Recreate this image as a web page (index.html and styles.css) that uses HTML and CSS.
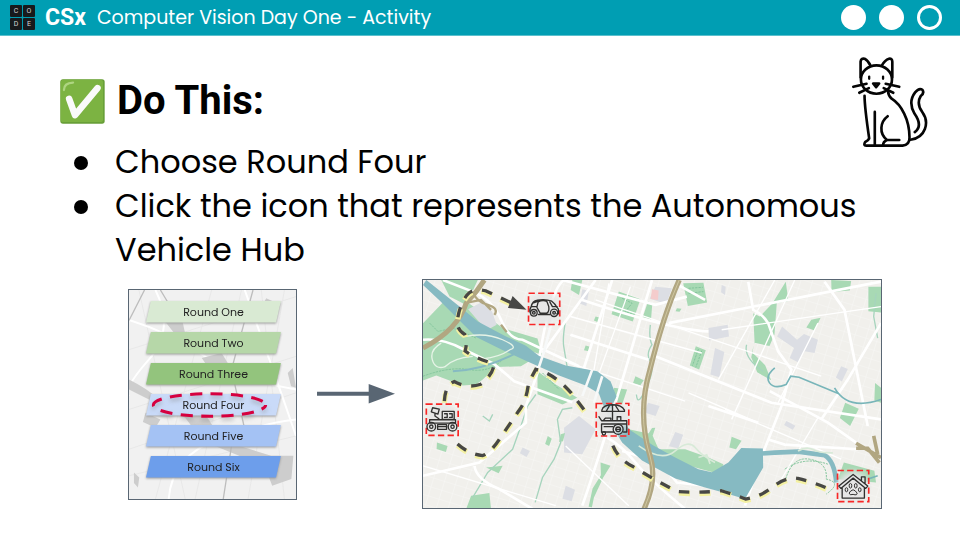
FILE: index.html
```html
<!DOCTYPE html>
<html lang="en">
<head>
<meta charset="utf-8">
<meta name="viewport" content="width=device-width, initial-scale=1">
<title>Computer Vision Day One - Activity</title>
<link rel="stylesheet" href="styles.css">
</head>
<body>
<header class="topbar">
  <div class="logo"><span>C</span><span>O</span><span>D</span><span>E</span></div>
  <strong class="course">CSx</strong>
  <span class="lesson">Computer Vision Day One - Activity</span>
  <div class="progress"><i class="dot"></i><i class="dot"></i><i class="dot dot-open"></i></div>
</header>
<main>
  <section class="intro">
    <div class="title-row">
      <svg class="check" viewBox="0 0 138 138" aria-hidden="true">
        <rect x="1" y="1" width="136" height="136" rx="8" fill="#689f38"/>
        <rect x="2" y="2" width="130" height="130" rx="8" fill="#7cb342"/>
        <path d="M12 34Q12 12 40 11" fill="none" stroke="#aed581" stroke-width="7" stroke-linecap="round"/>
        <path d="M28 61 46 111 115 28" fill="none" stroke="#fafafa" stroke-width="20" stroke-linecap="round" stroke-linejoin="round"/>
      </svg>
      <h1>Do This:</h1>
    </div>
    <svg class="cat" viewBox="96 168 236 282" fill="none" stroke="#050505" stroke-width="8" stroke-linecap="round" stroke-linejoin="round" aria-hidden="true">
      <path d="M125 232V184Q126 173 137 175Q148 181 155 196M189 196Q198 179 211 175Q221 174 221 184V232"/>
      <ellipse cx="173" cy="238" rx="47" ry="43"/>
      <path d="M151 229v7M193 229v7" stroke-width="7"/>
      <path d="M163 250h18l-9 11ZM143 251l-40 9M150 264l-29 14M201 251l41 9M195 264l29 14"/>
      <path d="M137 287Q137 320 151 416Q148 423 139 427Q132 438 142 438H252Q274 436 273 413C273 359 248 314 219 296Q209 287 208 274"/>
      <path d="M168 336V437M207 349C184 366 180 401 205 421H242M205 421Q193 426 193 437"/>
      <path d="M276 420C322 414 334 367 312 337Q293 311 307 288Q319 279 312 269Q302 262 290 277Q268 306 288 341C307 368 304 386 289 397"/>
    </svg>
    <ul class="steps">
      <li>Choose Round Four</li>
      <li>Click the icon that represents the Autonomous Vehicle Hub</li>
    </ul>
  </section>
  <section class="figures">
    <div class="rounds">
      <svg class="rounds-map" viewBox="0 0 505 630" preserveAspectRatio="none" fill="none" aria-hidden="true">
        <path d="M0 0H505V630H0Z" fill="#f1f1f1"/>
        <g stroke="#e8e8e8" stroke-width="3"><path d="M0 180 505 20M0 480 505 310M0 560 505 440M0 360 505 200M30 0 170 630M250 0 80 630M340 0 200 630M470 0 360 630M400 0 470 630"/></g>
        <g stroke="#fff" stroke-width="6"><path d="M0 90Q130 130 230 200T505 300M80 0Q140 120 60 210T0 320M350 0 460 310 505 440M120 630Q130 500 270 450T505 390"/></g>
        <g fill="#cdcdcd"><path d="M0 270Q60 300 90 330L200 350Q250 385 270 450L430 500H497L491 570 433 590 410 530 260 470Q200 430 170 385L80 340 0 300ZM105 90l55-3 10 45-30 2ZM390 70l25-45 18 8-12 34ZM220 205l60-15 20 32-65 5ZM480 250l15-15 10 60-15-5ZM50 370l45 20-15 25-38-17ZM15 550l16 15-4 30-12-13Z"/></g>
        <path d="M47 0 0 92M375 0 310 240 350 420M285 630 310 470M95 0 130 58" stroke="#bdbdbd" stroke-width="4"/>
      </svg>
      <button class="round r1"><span>Round One</span></button>
      <button class="round r2"><span>Round Two</span></button>
      <button class="round r3"><span>Round Three</span></button>
      <div class="picked">
        <button class="round r4"><span>Round Four</span></button>
        <svg class="ring" viewBox="0 0 350 82" preserveAspectRatio="none" aria-hidden="true"><ellipse cx="175" cy="41" rx="168" ry="33" fill="none" stroke="#d6003f" stroke-width="9" stroke-dasharray="36 25" stroke-dashoffset="18"/></svg>
      </div>
      <button class="round r5"><span>Round Five</span></button>
      <button class="round r6"><span>Round Six</span></button>
    </div>
    <svg class="arrow" viewBox="0 0 80 24" aria-hidden="true"><path d="M0 12H56" stroke="#596673" stroke-width="4"/><path d="M53 2 80 12 53 22Z" fill="#596673"/></svg>
    <div class="map">
      <svg viewBox="0 0 1380 687" preserveAspectRatio="xMidYMid slice" fill="none" role="img" aria-label="City map">
        <defs>
          <pattern id="streets" width="34" height="28" patternUnits="userSpaceOnUse" patternTransform="rotate(17)"><path d="M0 0H34M0 0V28" stroke="#f8f8f6" stroke-width="3"/></pattern>
          <radialGradient id="halo"><stop offset=".55" stop-color="#e6e6e6" stop-opacity=".95"/><stop offset="1" stop-color="#dcdcdc" stop-opacity="0"/></radialGradient>
        </defs>
        <path d="M0 0H1380V690H0Z" fill="#f1f0ec"/>
        <path d="M0 0H1380V690H0Z" fill="url(#streets)"/>
        <g fill="#dcdee4">
          <path d="M425 445 470 410 520 450 480 525 425 520ZM430 620l28 12-10 35-28-8ZM300 505l22 10-10 18-20-11ZM480 28l20 5-8 45-20-7ZM700 20l50 5-17 48-50-17ZM678 370l35 10-12 30-34-11ZM760 458l24 8-15 42-28-7ZM1082 140 1127 180 1148 163 1190 180 1180 220 1150 215 1130 248 1105 235 1118 205 1067 170ZM860 145l58-10 4 35-60 12ZM880 205l28 12-15 76-27-8ZM1260 260l20 8-18 38-18-12ZM1095 425l27 14-8 12-26-14ZM900 15l12 5-2 25-12-8Z"/>
          <path d="M690 28l20 4-2 28-22-3Z" fill="#f4cccc"/>
        </g>
        <g fill="#a8d9b4">
          <path d="M0 130 60 68 100 105 210 180 320 245 295 260 220 262 180 300 160 315 120 318 80 303 40 288 0 303ZM55 0H165L130 75 80 50ZM125 60 240 145 345 176 358 225 305 208 190 160 110 115ZM345 275 400 315 465 355 420 375 345 344Z"/>
          <path d="M590 35 655 58 632 125 568 103ZM450 0H480L470 45 445 30ZM678 65l13 5-4 50-25-8ZM784 10 845 8 856 68 798 78ZM822 200l30 12-20 58-28-12ZM995 100l20 10 38-40 40-65 8 58-35 6-7 95-15 35-45-10-8 28 40 40 18 45-42-24-18-45 10-46Z"/>
          <path d="M1170 120 1198 114 1180 152 1155 143ZM1342 20H1380V98L1342 94ZM1230 0 1290 3 1286 32 1231 36ZM1272 370 1313 388 1287 440 1256 416ZM930 472l30 12-17 26-20-5ZM145 650l55-8 5 48H130ZM42 490l32 10-5 18-28-9ZM376 470l12 8-8 22-12-6ZM415 465l13-4-6 25-12 2ZM620 450 690 465 710 510 790 510 860 535 905 555 895 585 785 555 650 510ZM700 445l-10 30-20 3 20-32ZM1268 550 1360 575 1365 610 1250 600ZM535 550l30 10-22 35-28 60-6 30-10-2 12-55 25-40ZM640 290l25 12-10 15-22-7ZM1362 310l18 15v45l-20-7Z"/>
          <path d="M490 197l13 4-3 14-15-3ZM520 110l14 4-5 14-14-6ZM1082 32l10 1v8h-10ZM765 85l14 2-6 9-12-2ZM190 565l50-5-12 22ZM575 325l40 5-15 45-22-10Z"/>
        </g>
        <path d="M136 88 175 68 208 95 222 135 195 150 168 125Z" fill="#dcdee4"/>
        <path d="M20 130 45 155 90 145 160 175M0 290Q80 260 140 270T240 240M360 280 410 330M600 55l30 15-20 25 25 10M800 25l43-3M800 40l45-5M830 208l-18 50M840 213l-18 50M1090 610q20-80 75-70t50 60q50 10 0 45M1090 570q60-40 130-15" stroke="#82c59b" stroke-width="3" stroke-dasharray="7 3"/>
        <path d="M685 135q-5 40 5 60-20 30-5 50t-12 80-30 20M430 120q-10 55-6 80t10 60M975 195q-10 40 50 80M1365 40l-7 70 12 65M340 345l-25 35-20 60-25 70-75 70-45 75M450 385l-30 5-15 30 10 70-20 50-35 55-22 75M180 410l20 15 10-20" stroke="#a6d4bd" stroke-width="4"/>
        <g stroke="#fff" stroke-width="8">
          <path d="M60 0 150 35Q210 60 235 120T300 180L470 260M350 265 310 380 310 430 170 550 0 590M155 560Q160 600 230 630L330 690M480 680Q550 480 660 100L690 0M360 220 520 0M345 270Q380 30 425 0M480 60Q750 150 860 155M444 165 680 240M700 230 1050 370 1380 420M420 0 700 75 795 50M740 130 1380 5M760 10 850 60M555 475Q600 500 640 550T790 690M600 515Q720 545 765 610L900 625"/>
          <path d="M980 5 995 90Q1020 100 1040 130L1070 215 1110 270 1080 380 1025 520 970 680M1210 5 1270 90 1340 440M1380 130 1280 300 1200 420M1010 430 860 380M1045 335 1220 430 1305 490M1038 480 1090 496 1310 510M570 0 480 280M0 180Q60 175 120 208L214 253 275 305 450 368"/>
        </g>
        <g stroke="#fff" stroke-width="4"><path d="M0 560 400 680M560 10 510 300M625 20 520 310M444 110 840 220M520 60 1200 290M440 250 790 365M800 340 1010 430M1060 0 890 300M1120 0 930 420M1190 130 1070 370M910 390 1260 540M430 500 620 680M900 150 1380 80M1190 415 1080 600"/></g>
        <path d="M10 0 60 40 110 80 165 125 250 170 310 198 350 229 430 258 525 275 565 305 583 350 570 378 595 420 625 453 694 499 760 535 830 570 870 579 920 550 959 506 1024 508 1025 565 970 660 905 640 850 625 760 598 660 544 600 490 570 440 545 382 530 342 490 318 410 288 310 243 250 216 160 172 110 122 50 62 0 15Z" fill="#86bac2"/>
        <path d="M1020 523 1060 520 1130 517 1210 528Q1240 545 1245 610" stroke="#86bac2" stroke-width="14"/>
        <path d="M1060 265q-30 25-16 45t50 5l14-25 25 3 120 50M1240 325q40 70 140 35M1340 600l30-10" stroke="#78b5b9" stroke-width="5"/>
        <path d="M90 275Q190 270 290 215" stroke="#86bac2" stroke-width="6"/>
        <path d="M650 500q70 50 110 15t60-10 60 45M830 535l25-8 10 27M1130 515q25-15 45-4t60 10" stroke="#d8ead8" stroke-width="5"/>
        <path d="M340 290 365 215 400 80M480 350 510 270M515 370 540 290" stroke="#f7f9f9" stroke-width="8"/>
        <path d="M55 190Q20 210 28 240T65 262Q90 235 150 230M130 170Q190 158 240 180T262 210Q230 232 180 238" stroke="#e6f3e6" stroke-width="4"/>
        <g stroke="#b1a681" stroke-width="15"><path d="M185 0 160 35 130 70Q105 150 0 205"/><path d="M772 0Q725 105 684 270C650 385 666 470 684 530Q707 600 666 690" stroke-width="16"/><path d="M150 36Q160 65 195 75T215 105M125 70 175 60 205 90M235 135l17 22" stroke-width="7"/><path d="M1305 492 1380 535M1305 507H1340L1375 550M1358 470 1370 525" stroke-width="11"/></g>
        <path d="M772 0Q725 105 684 270C650 385 666 470 684 530Q707 600 666 690" stroke="#d0c8a0" stroke-width="3"/>
        <g stroke="#f4f1a2" stroke-width="16" stroke-dasharray="34 28" transform="translate(0 4)">
          <path d="M264 68 190 33Q150 22 132 46Q108 78 103 128Q104 152 126 164Q134 190 127 214Q150 232 214 253Q212 284 174 314Q134 328 94 306Q64 316 64 378"/>
          <path d="M104 494Q140 526 180 529Q204 520 230 480L288 395Q312 366 318 310L340 269Q396 282 447 341L499 409"/>
          <path d="M572 499Q590 542 634 563L694 599 764 637Q825 643 899 635Q948 650 972 660Q1010 654 1039 634Q1094 590 1129 598Q1182 610 1236 636"/>
        </g>
        <g stroke="#474745" stroke-width="10" stroke-dasharray="32 30">
          <path d="M264 68 190 33Q150 22 132 46Q108 78 103 128Q104 152 126 164Q134 190 127 214Q150 232 214 253Q212 284 174 314Q134 328 94 306Q64 316 64 378"/>
          <path d="M104 494Q140 526 180 529Q204 520 230 480L288 395Q312 366 318 310L340 269Q396 282 447 341L499 409"/>
          <path d="M572 499Q590 542 634 563L694 599 764 637Q825 643 899 635Q948 650 972 660Q1010 654 1039 634Q1094 590 1129 598Q1182 610 1236 636"/>
        </g>
        <path d="M270 48 312 90 256 84Z" fill="#474745"/>
        <g fill="url(#halo)"><circle cx="365" cy="88" r="58"/><circle cx="58" cy="422" r="58"/><circle cx="571" cy="422" r="58"/><circle cx="1296" cy="621" r="58"/></g>
        <g stroke="#f82727" stroke-width="5" stroke-dasharray="19 10"><path d="M318 40h94v94h-94ZM10 374h96v94H10ZM522 372h98v98h-98ZM1249 574h94v94h-94Z"/></g>
        <g stroke="#30302f" stroke-width="4" stroke-linecap="round" stroke-linejoin="round">
          <g><path d="M324 100q-5-10 2-20 4-17 18-19 24-5 44 3 10 8 14 16l6 8v14h-5M348 104h35M327 80h15M333 69l15-5M347 66l-4 16 10 18h20q8-5 6-20l-6-16q-14-4-26 2Z"/><circle cx="334" cy="99" r="10"/><circle cx="334" cy="99" r="4"/><circle cx="395" cy="99" r="11"/><circle cx="395" cy="99" r="4"/><path d="M382 66l8 14h14"/></g>
          <g><path d="M20 421h78v10H20ZM29 385l20 4-4 15-20-7ZM36 402v8l12 8M58 396h36v24H58ZM65 403h8v11h-8M80 403h8v11h-8M33 431h55M44 442h28M44 436h27v14H44Z"/><circle cx="25" cy="442" r="13"/><circle cx="25" cy="442" r="5"/><circle cx="89" cy="442" r="13"/><circle cx="89" cy="442" r="5"/></g>
          <g><path d="M539 392Q543 376 571 376T607 392V396H539ZM553 394l8-14M571 394v-18M590 394l-9-14M571 398v22M530 412l8 12h76v10h-76v25M614 434v24h-10M575 458h-33M545 421l5-5h16v6M585 421v-9h11v9M546 442h26"/><circle cx="588" cy="450" r="15"/><circle cx="588" cy="450" r="7"/><path d="M581 450h14"/><circle cx="545" cy="462" r="5"/></g>
          <g><path d="M1253 621 1296 586 1340 621 1334 628 1296 597 1259 628ZM1263 627v30h67v-30M1321 604v-11h11v20"/></g>
        </g>
        <g stroke="#30302f" stroke-width="3"><ellipse cx="1288" cy="620" rx="4" ry="7"/><ellipse cx="1304" cy="620" rx="4" ry="7"/><ellipse cx="1276" cy="632" rx="4" ry="6"/><ellipse cx="1316" cy="632" rx="4" ry="6"/><path d="M1296 632q7 2 12 10 1 8-12 4-11 4-12-4 3-7 12-10Z"/></g>
      </svg>
    </div>
  </section>
</main>
</body>
</html>
```
FILE: styles.css
```css
* { box-sizing: border-box; }
body {
  margin: 0;
  background: #fff;
  color: #000;
  font-family: Poppins, Inter, "Open Sans", sans-serif;
}
.topbar {
  display: flex;
  align-items: center;
  height: 36px;
  padding: 0 18px 0 10px;
  background: #009eb3;
  border-bottom: 1px solid #5bc0cd;
  color: #fff;
}
.logo {
  display: grid;
  grid-template-columns: 12px 12px;
  gap: 1px;
}
.logo span {
  height: 12px;
  border-radius: 1px;
  background: #171a1c;
  color: #d6d6d6;
  font: 7px/12px Roboto, sans-serif;
  text-align: center;
}
.course {
  margin-left: 10px;
  font: 700 23px/34px Roboto, sans-serif;
}
.lesson {
  margin-left: 11px;
  font-size: 19px;
  line-height: 34px;
}
.progress {
  display: flex;
  gap: 13px;
  margin-left: auto;
}
.dot {
  width: 25px;
  height: 25px;
  border-radius: 50%;
  background: #fff;
}
.dot-open {
  border: 3px solid #fff;
  background: none;
}
.intro {
  display: grid;
  grid-template-columns: 1fr auto;
  padding: 20px 31px 0 60px;
}
.title-row {
  display: flex;
  align-items: center;
  gap: 12px;
  padding-bottom: 4px;
}
.check {
  width: 45px;
  height: 45px;
}
h1 {
  margin: 0;
  font: 700 40px/48px Roboto, sans-serif;
}
.cat {
  width: 78px;
  height: 94px;
}
.steps {
  grid-column: 1 / -1;
  margin: -10px 0 0;
  padding: 0 30px 0 55px;
  font-size: 32px;
  line-height: 44px;
  list-style: none;
}
.steps li::before {
  content: "";
  float: left;
  width: 14px;
  height: 14px;
  margin: 16px 0 0 -41px;
  border-radius: 50%;
  background: #000;
}
.figures {
  display: grid;
  grid-template-columns: 169fr 78fr 467fr;
  column-gap: 20px;
  align-items: center;
  padding: 7px 78px 24px 128px;
}
.arrow {
  width: 100%;
}
.map {
  margin-left: 7px;
  border: 1px solid #596673;
}
.map svg {
  display: block;
  width: 100%;
}
.rounds {
  position: relative;
  display: flex;
  flex-direction: column;
  gap: 9px;
  padding: 11px 15px 21px 17px;
  border: 1px solid #596673;
}
.rounds-map {
  position: absolute;
  inset: 0;
  width: 100%;
  height: 100%;
}
.round {
  position: relative;
  display: block;
  width: 100%;
  height: 22px;
  padding: 0;
  border: 0;
  background: none;
  color: #222;
  font: 11px/22px Poppins, Inter, sans-serif;
  filter: drop-shadow(0 1px 1px #999);
}
.round span {
  display: block;
  clip-path: polygon(5px 0, 100% 0, calc(100% - 5px) 100%, 0 100%);
}
.r1 span { background: #d9ead3; }
.r2 span { background: #b6d7a8; }
.r3 span { background: #93c47d; }
.r4 span { background: #c9daf8; }
.r5 span { background: #a4c2f4; }
.r6 span { background: #6d9eeb; }
.picked { position: relative; }
.ring {
  position: absolute;
  top: -3px;
  left: 5px;
  width: 117px;
  height: 28px;
  filter: drop-shadow(0 3px 2px #8888);
}
```
